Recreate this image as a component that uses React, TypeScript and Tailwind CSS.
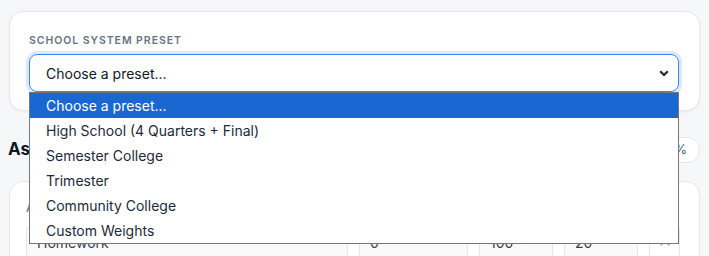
import React from 'react';
import { ChevronUp } from 'lucide-react';

const OPTIONS = [
  'Choose a preset...',
  'High School (4 Quarters + Final)',
  'Semester College',
  'Trimester',
  'Community College',
  'Custom Weights',
];

export default function App() {
  return (
    <div className="min-h-screen bg-[#f6f7f9] px-[9px] pt-[11px] font-['Inter',sans-serif] text-[#111827]">
      {/* Preset card */}
      <div className="rounded-[14px] border border-[#e5e7eb] bg-white pl-[19px] pr-[20px] pt-[23px] pb-[18px] shadow-[0_1px_3px_rgba(0,0,0,0.05)]">
        <div className="text-[10.5px] font-semibold uppercase leading-[12px] tracking-[0.09em] text-[#6b7280]">
          School system preset
        </div>
        <div className="relative mt-[7px]">
          <div className="flex h-[38px] items-center justify-between rounded-[8px] border border-[#3b82f6] pl-4 pr-[9px] text-[14px] ring-[3px] ring-[#dde8fd]">
            <span>Choose a preset...</span>
            <svg width="10" height="7" viewBox="0 0 10 7" className="text-[#1f2937]">
              <path d="M1.2 1.3 L5 5 L8.8 1.3" fill="none" stroke="currentColor" strokeWidth="2.3" />
            </svg>
          </div>
          {/* open listbox */}
          <div className="absolute left-0 right-0 top-[38px] z-20 border border-[#767676] bg-white">
            {OPTIONS.map((o, i) => (
              <div
                key={o}
                className={`flex h-[25px] items-center pl-4 text-[14px] ${
                  i === 0 ? 'bg-[#1a67d2] text-white' : 'text-[#1e293b]'
                }`}
              >
                {o}
              </div>
            ))}
          </div>
        </div>
      </div>

      {/* Categories heading */}
      <div className="mt-[26px] flex h-[26px] items-center justify-between">
        <h2 className="-ml-[1px] text-[17px] font-bold text-[#111827]">Assignment Categories</h2>
        <div className="flex h-[26px] items-center rounded-full border border-[#e5e7eb] bg-white px-3 text-[13px] text-[#4b5b78]">
          Total: 100%
        </div>
      </div>

      {/* Categories card */}
      <div className="mt-[18px] rounded-[14px] border border-[#e5e7eb] bg-white px-4 pt-[18px] pb-4">
        <div className="text-[11px] font-medium text-[#6b7280]">Add categories and set their weights</div>
        <div className="mt-[8px] flex gap-[11px]">
          <div className="flex h-[36px] w-[322px] items-center rounded-[6px] border border-[#e5e7eb] bg-[#fafafa] px-[10px] text-[14px] text-[#374151]">
            Homework
          </div>
          <div className="flex h-[36px] w-[109px] items-center rounded-[6px] border border-[#e5e7eb] bg-[#fafafa] px-[10px] text-[14px] text-[#374151]">
            0
          </div>
          <div className="flex h-[36px] w-[74px] items-center rounded-[6px] border border-[#e5e7eb] bg-[#fafafa] px-[10px] text-[14px] text-[#374151]">
            100
          </div>
          <div className="flex h-[36px] w-[74px] items-center rounded-[6px] border border-[#e5e7eb] bg-[#fafafa] px-[10px] text-[14px] text-[#374151]">
            20
          </div>
          <div className="flex h-[36px] w-[31px] items-center justify-center rounded-[6px] border border-[#e5e7eb] bg-white text-[#9ca3af]">
            <ChevronUp size={16} />
          </div>
        </div>
      </div>
    </div>
  );
}
